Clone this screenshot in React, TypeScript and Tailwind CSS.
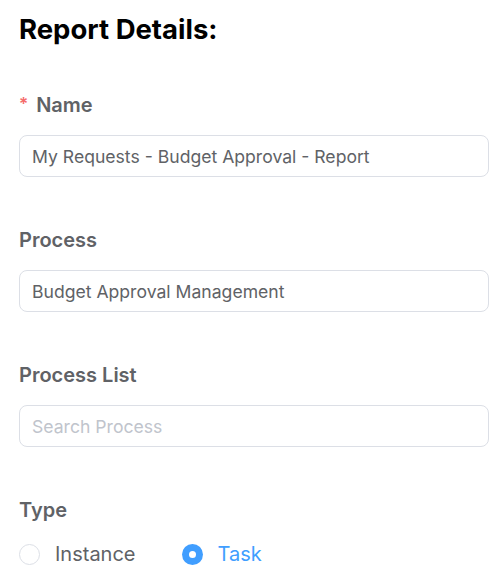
import { useState } from 'react';

function Field({ label, required, value, placeholder }: { label: string; required?: boolean; value?: string; placeholder?: string }) {
  return (
    <div className="mb-[51px]">
      <label className="flex items-center h-[24px] text-[20px] font-semibold text-[#606266] mb-[18px]">
        {required && <span className="text-[#f56c6c] mr-[8px] text-[17px]">*</span>}
        {label}
      </label>
      <input
        defaultValue={value}
        placeholder={placeholder}
        className="w-full h-[42px] px-[12px] border border-[#dcdfe6] rounded-[8px] text-[17.6px] text-[#606266] placeholder:text-[#c0c4cc] outline-none"
      />
    </div>
  );
}

export default function App() {
  const [type, setType] = useState('task');

  return (
    <div className="bg-white pl-[19px] pr-[11px] pt-[12px]" style={{ fontFamily: 'Inter, "Noto Sans", sans-serif' }}>
      <h1 className="text-[27.5px] font-bold text-black h-[34px] leading-[34px] mb-[47px]">Report Details:</h1>
      <Field label="Name" required value="My Requests - Budget Approval - Report" />
      <Field label="Process" value="Budget Approval Management" />
      <Field label="Process List" placeholder="Search Process" />
      <div>
        <label className="flex items-center h-[24px] text-[20px] font-semibold text-[#606266] mb-[17px]">Type</label>
        <div className="flex items-center gap-[46px]">
          {[
            { id: 'instance', label: 'Instance' },
            { id: 'task', label: 'Task' },
          ].map((o) => (
            <button key={o.id} onClick={() => setType(o.id)} className="flex items-center gap-[15px]">
              <span
                className={`w-[21px] h-[21px] rounded-full flex items-center justify-center ${
                  type === o.id ? 'bg-[#409eff]' : 'border border-[#dcdfe6]'
                }`}
              >
                {type === o.id && <span className="w-[7px] h-[7px] rounded-full bg-white" />}
              </span>
              <span className={`text-[20px] ${type === o.id ? 'text-[#409eff]' : 'text-[#606266]'}`}>{o.label}</span>
            </button>
          ))}
        </div>
      </div>
    </div>
  );
}
